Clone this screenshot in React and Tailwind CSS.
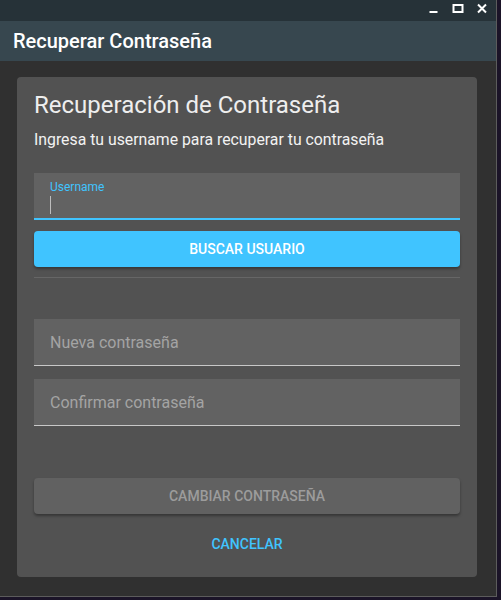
import React from 'react';

const font = { fontFamily: 'Roboto, "Noto Sans", sans-serif' };

const TitleBar = () => (
  <div className="h-[21px] bg-[#263238] flex items-start justify-end">
    <svg width="501" height="21" className="shrink-0" viewBox="0 0 496 21">
      <rect x="432" y="11" width="8" height="2" fill="#fff" />
      <rect x="456" y="5" width="9" height="7" fill="none" stroke="#fff" strokeWidth="2" />
      <path d="M480.5 4.5 L488.5 12.5 M488.5 4.5 L480.5 12.5" stroke="#fff" strokeWidth="2" />
    </svg>
  </div>
);

const TextField = ({ label, placeholder, focused }) => (
  <div
    className={`h-[47px] bg-[#626262] px-4 ${
      focused ? 'border-b-2 border-[#40c4ff]' : 'border-b border-[#c8c8c8]'
    }`}
  >
    {focused ? (
      <div className="pt-[6px]">
        <p className="text-[12px] leading-[16px] text-[#40c4ff]">{label}</p>
        <div className="mt-[1px] w-px h-[18px] bg-[#bdbdbd]" />
      </div>
    ) : (
      <p className="pt-[12px] text-[16px] leading-[24px] text-[#a4a4a4]">{placeholder}</p>
    )}
  </div>
);

export default function App() {
  return (
    <div className="w-[501px] h-[600px] bg-[#1b1428] overflow-hidden" style={font}>
      <div className="w-[497px] h-[597px] bg-[#303030] border-r border-b border-[#5c5c5c] flex flex-col">
        <TitleBar />
        <div className="h-[40px] bg-[#37474f] flex items-center px-[13px]">
          <h1 className="text-[20px] font-medium text-white leading-none">Recuperar Contraseña</h1>
        </div>
        <div className="pt-4 pl-[17px]">
          <div className="w-[460px] h-[500px] bg-[#525252] rounded-[4px] px-[17px] pt-[14px] flex flex-col">
            <h2 className="text-[24px] leading-[28px] text-[#eeeeee]">Recuperación de Contraseña</h2>
            <p className="mt-[9px] text-[15.8px] leading-[24px] text-[#f2f2f2]">
              Ingresa tu username para recuperar tu contraseña
            </p>
            <div className="mt-[21px]">
              <TextField label="Username" focused />
            </div>
            <button className="mt-[11px] h-[36px] rounded-[4px] bg-[#40c4ff] text-white text-[14px] font-medium shadow-[0_2px_3px_rgba(0,0,0,0.35)]">
              BUSCAR USUARIO
            </button>
            <div className="mt-[10px] h-px bg-[#666666]" />
            <div className="mt-[41px]">
              <TextField placeholder="Nueva contraseña" />
            </div>
            <div className="mt-[13px]">
              <TextField placeholder="Confirmar contraseña" />
            </div>
            <button className="mt-[52px] h-[36px] rounded-[4px] bg-[#616161] text-[#9c9c9c] text-[14px] font-medium shadow-[0_2px_3px_rgba(0,0,0,0.35)]">
              CAMBIAR CONTRASEÑA
            </button>
            <button className="mt-[12px] h-[36px] text-[#40c4ff] text-[14px] font-medium">
              CANCELAR
            </button>
          </div>
        </div>
      </div>
    </div>
  );
}
